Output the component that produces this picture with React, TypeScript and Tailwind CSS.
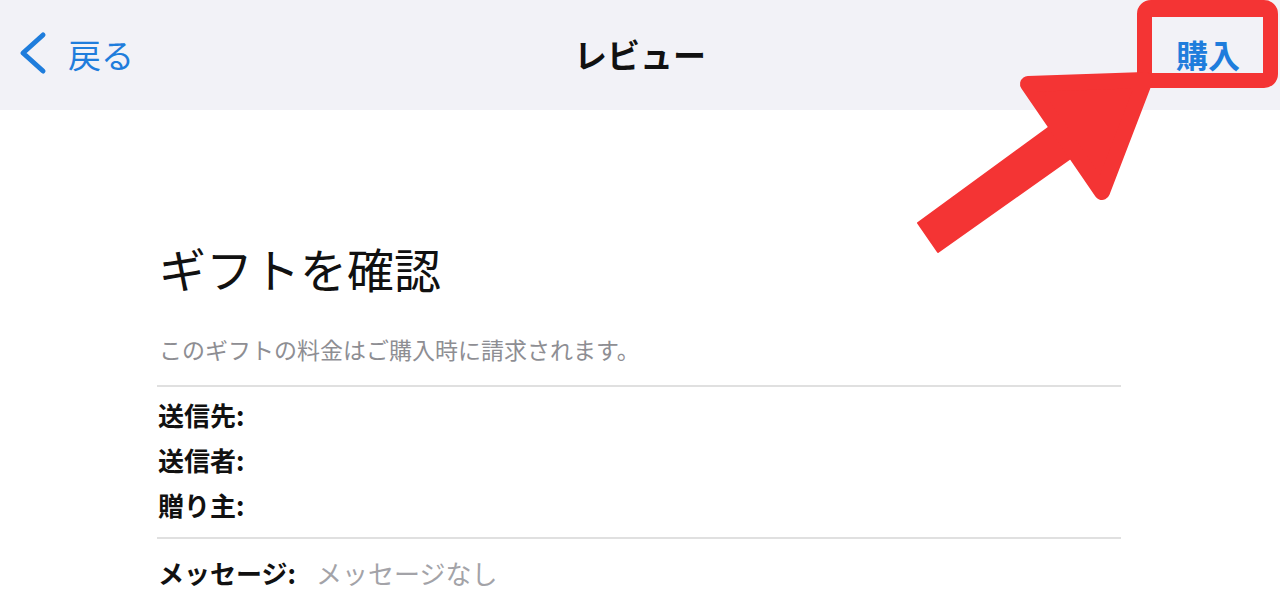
import React from "react";

const jp = { fontFamily: '"Noto Sans CJK JP", "Noto Sans", sans-serif' };

export default function App() {
  return (
    <div className="relative w-[1280px] h-[598px] overflow-hidden bg-white" style={jp}>
      {/* Nav bar */}
      <div className="relative h-[110px] bg-[#f2f2f7] flex items-center justify-between pl-[18px] pr-[40px]">
        <div className="flex items-center gap-[20px] text-[#1f7ddc] pb-[2px]">
          <svg width="30" height="44" viewBox="0 0 30 44" className="-mt-[2px]">
            <polyline points="25,4 5,22 25,40" fill="none" stroke="#1f7ddc" strokeWidth="5" strokeLinecap="round" strokeLinejoin="round" />
          </svg>
          <span className="text-[33px] leading-none">戻る</span>
        </div>
        <div className="absolute left-0 right-0 top-0 h-[110px] flex items-center justify-center pointer-events-none">
          <span className="text-[33px] font-bold leading-none text-[#111] pb-[2px]">レビュー</span>
        </div>
        <span className="text-[32px] font-bold leading-none text-[#1f7ddc] pb-[2px]">購入</span>
      </div>

      {/* Content */}
      <div className="pl-[157px] w-[1121px]">
        <h1 className="mt-[130px] text-[47px] leading-[56px] text-[#111] pl-[2px]">ギフトを確認</h1>
        <p className="mt-[37px] text-[23px] leading-[32px] text-[#8e8e93] pl-[2px]">このギフトの料金はご購入時に請求されます。</p>
        <div className="mt-[20px] h-[2px] bg-[#e0e0e0]" />
        <div className="mt-[5px] flex flex-col text-[26px] leading-[45px] font-bold text-[#111] pl-[1px]">
          <div>送信先:</div>
          <div>送信者:</div>
          <div>贈り主:</div>
        </div>
        <div className="mt-[10px] h-[2px] bg-[#e0e0e0]" />
        <div className="mt-[11px] flex items-center gap-[20px] text-[26px] leading-[45px] pl-[1px]">
          <span className="font-bold text-[#111]">メッセージ:</span>
          <span className="text-[#a3a3a8]">メッセージなし</span>
        </div>
      </div>

      {/* Annotation: red box */}
      <div className="absolute left-[1137px] top-[0px] w-[141px] h-[88px] border-[15px] border-t-[17px] border-[#f43434] rounded-[14px]" />

      {/* Annotation: red arrow */}
      <svg className="absolute left-0 top-0 pointer-events-none" width="1280" height="598" viewBox="0 0 1280 598">
        <polygon points="918,223 1070,112 1092,143 938,252" fill="#f43434" stroke="#f43434" strokeWidth="2" strokeLinejoin="round" />
        <polygon points="1028,84 1145,80 1102,192" fill="#f43434" stroke="#f43434" strokeWidth="16" strokeLinejoin="round" />
      </svg>
    </div>
  );
}
